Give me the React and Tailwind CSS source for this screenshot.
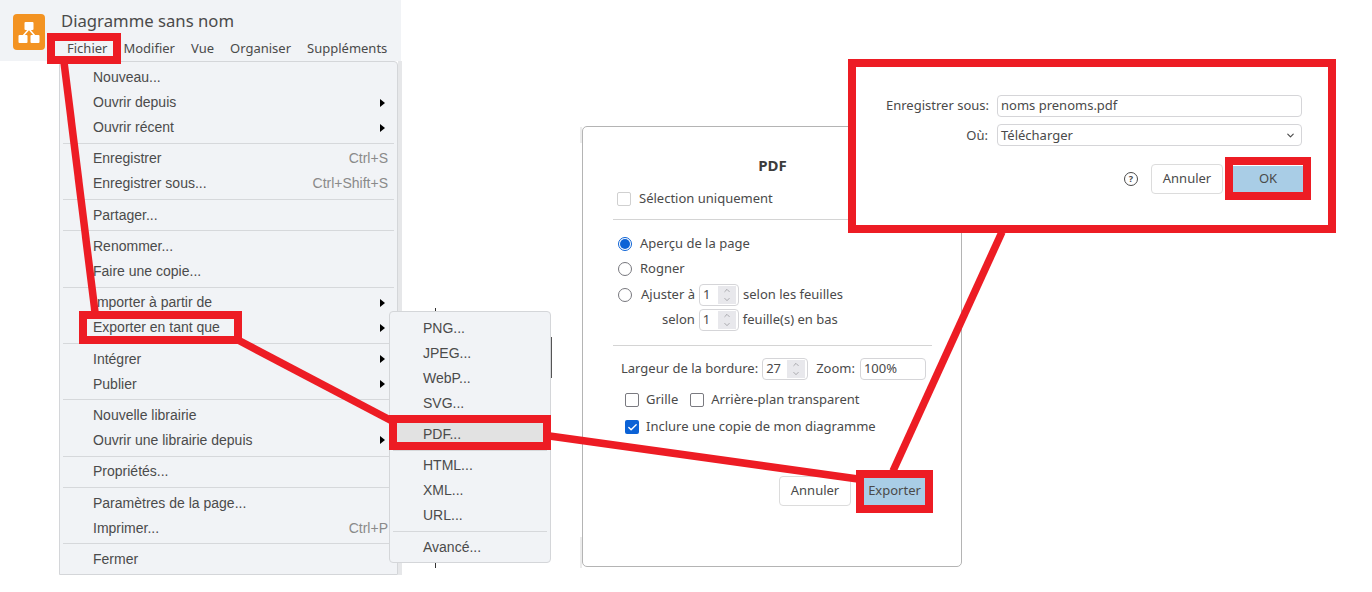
import { ChevronDown, ChevronUp, Check } from "lucide-react";

const UI_FONT = "font-['Noto_Sans',sans-serif]";

const fileMenu = [
  [{ label: "Nouveau..." }, { label: "Ouvrir depuis", sub: true }, { label: "Ouvrir récent", sub: true }],
  [{ label: "Enregistrer", key: "Ctrl+S" }, { label: "Enregistrer sous...", key: "Ctrl+Shift+S" }],
  [{ label: "Partager..." }],
  [{ label: "Renommer..." }, { label: "Faire une copie..." }],
  [{ label: "Importer à partir de", sub: true }, { label: "Exporter en tant que", sub: true }],
  [{ label: "Intégrer", sub: true }, { label: "Publier", sub: true }],
  [{ label: "Nouvelle librairie" }, { label: "Ouvrir une librairie depuis", sub: true }],
  [{ label: "Propriétés..." }],
  [{ label: "Paramètres de la page..." }, { label: "Imprimer...", key: "Ctrl+P" }],
  [{ label: "Fermer" }],
];

const exportMenu = [
  [{ label: "PNG..." }, { label: "JPEG..." }, { label: "WebP..." }, { label: "SVG..." }],
  [{ label: "PDF...", active: true }],
  [{ label: "HTML..." }, { label: "XML..." }, { label: "URL..." }],
  [{ label: "Avancé..." }],
];

function MenuRow({ item }) {
  return (
    <div className={`flex h-[25px] items-center pl-[33px] pr-[9px] ${item.active ? "bg-[#e2e2e2]" : ""}`}>
      <span className="flex-1">{item.label}</span>
      {item.key && <span className="text-[#8a8a8a]">{item.key}</span>}
      {item.sub && <span className="mr-[3px] h-0 w-0 border-y-[4px] border-l-[5px] border-y-transparent border-l-black" />}
    </div>
  );
}

function Menu({ groups, className }) {
  return (
    <div className={`absolute rounded-[4px] border border-[#d4d6d9] bg-[#f1f3f6] font-['Liberation_Sans',sans-serif] text-[14px] text-[#4b4b4b] ${className}`}>
      {groups.map((group, i) => (
        <div key={i}>
          {i > 0 && <div className="mx-[3px] my-[2.67px] h-px bg-[#d6d8db]" />}
          {group.map((item) => <MenuRow key={item.label} item={item} />)}
        </div>
      ))}
    </div>
  );
}

function Checkbox({ checked }) {
  if (checked) {
    return (
      <span className="flex h-[14px] w-[14px] shrink-0 items-center justify-center rounded-[2px] bg-[#0b62d6]">
        <Check size={11} strokeWidth={3} className="text-white" />
      </span>
    );
  }
  return <span className="block h-[14px] w-[14px] shrink-0 rounded-[2px] border border-[#7a7a80] bg-white" />;
}

function Radio({ checked }) {
  return (
    <span className={`flex h-[14px] w-[14px] items-center justify-center rounded-full border bg-white ${checked ? "border-[#0b62d6]" : "border-[#77777d]"}`}>
      {checked && <span className="h-[10px] w-[10px] rounded-full bg-[#0b62d6]" />}
    </span>
  );
}

function Spinner({ value, width }) {
  return (
    <span className={`flex h-[22px] items-center justify-between rounded-[4px] border border-[#d5d5d8] bg-white pl-[3px] pr-[2px] ${width}`}>
      <span>{value}</span>
      <span className="flex h-[18px] w-[18px] flex-col items-center justify-center bg-[#e8e8ec] text-[#77777d]">
        <ChevronUp size={10} strokeWidth={1.5} />
        <ChevronDown size={10} strokeWidth={1.5} />
      </span>
    </span>
  );
}

function RedBox({ className }) {
  return <div className={`absolute border-[8px] border-[#ed1c24] ${className}`} />;
}

function Header() {
  return (
    <div className={`absolute left-0 top-0 flex h-[61px] w-[401px] items-start bg-[#f1f3f6] pl-[13px] pt-[14px] ${UI_FONT}`}>
      <div className="flex h-[36px] w-[32px] shrink-0 items-center justify-center rounded-[4px] bg-[#f39322]">
        <svg width="26" height="24" viewBox="0 0 26 24">
          <path d="M13 9 L7 16 M13 9 L19 16" stroke="#fff" strokeWidth="1.6" fill="none" />
          <rect x="8.5" y="2" width="9" height="8" rx="1" fill="#fff" />
          <rect x="2.5" y="15" width="9" height="8" rx="1" fill="#fff" />
          <rect x="14.5" y="15" width="9" height="8" rx="1" fill="#fff" />
        </svg>
      </div>
      <div className="-mt-[5px] ml-[16px] text-[#4a4a4a]">
        <div className="text-[16.7px] leading-[24px]">Diagramme sans nom</div>
        <div className="mt-[5px] flex gap-[16px] pl-[6px] text-[13px] leading-[20px]">
          <span>Fichier</span>
          <span>Modifier</span>
          <span>Vue</span>
          <span>Organiser</span>
          <span>Suppléments</span>
        </div>
      </div>
    </div>
  );
}

function PdfDialog() {
  return (
    <div className={`absolute left-[582px] top-[126px] h-[441px] w-[380px] rounded-[5px] border border-[#b4b4b4] bg-white pl-[30px] pr-[29px] pt-[28px] text-[13px] text-[#4a4a4a] ${UI_FONT}`}>
      <div className="text-center text-[15px] font-bold leading-[20px] text-[#3c3c3c]">PDF</div>
      <div className="mt-[15px] flex h-[18px] items-center gap-[8px] pl-[4px]">
        <span className="h-[14px] w-[14px] rounded-[2px] border border-[#d0d0d0] bg-white" />
        <span>Sélection uniquement</span>
      </div>
      <div className="mt-[11px] h-px bg-[#d4d4d4]" />
      <div className="mt-[15px] flex h-[18px] items-center gap-[8px] pl-[5px]">
        <Radio checked />
        <span>Aperçu de la page</span>
      </div>
      <div className="mt-[7px] flex h-[18px] items-center gap-[8px] pl-[5px]">
        <Radio />
        <span>Rogner</span>
      </div>
      <div className="mt-[6px] flex h-[22px] items-center pl-[5px]">
        <Radio />
        <span className="ml-[9px] mr-[4px]">Ajuster à</span>
        <Spinner value="1" width="w-[40px]" />
        <span className="ml-[4px]">selon les feuilles</span>
      </div>
      <div className="mt-[3px] flex h-[22px] items-center pl-[49px]">
        <span className="mr-[4px]">selon</span>
        <Spinner value="1" width="w-[40px]" />
        <span className="ml-[4px]">feuille(s) en bas</span>
      </div>
      <div className="mt-[14px] h-px bg-[#d4d4d4]" />
      <div className="mt-[12px] flex h-[22px] items-center pl-[8px]">
        <span className="mr-[4px]">Largeur de la bordure:</span>
        <Spinner value="27" width="w-[46px]" />
        <span className="ml-[8px] mr-[5px]">Zoom:</span>
        <span className="flex h-[22px] w-[66px] items-center rounded-[4px] border border-[#d5d5d8] pl-[3px]">100%</span>
      </div>
      <div className="mt-[11px] flex h-[18px] items-center pl-[12px]">
        <Checkbox />
        <span className="ml-[7px]">Grille</span>
        <span className="ml-[12px] flex"><Checkbox /></span>
        <span className="ml-[7px]">Arrière-plan transparent</span>
      </div>
      <div className="mt-[9px] flex h-[18px] items-center gap-[7px] pl-[12px]">
        <Checkbox checked />
        <span>Inclure une copie de mon diagramme</span>
      </div>
      <div className="mt-[40px] flex h-[30px] justify-end pr-[7px]">
        <span className="flex w-[72px] items-center justify-center rounded-[4px] border border-[#dcdcdc] bg-white">Annuler</span>
        <span className="ml-[13px] flex w-[61px] items-center justify-center bg-[#a9cde6]">Exporter</span>
      </div>
    </div>
  );
}

function SaveDialog() {
  return (
    <div className={`absolute left-[848px] top-[59px] h-[174px] w-[488px] bg-white pl-[38px] pr-[34px] pt-[36px] text-[13px] text-[#4a4a4a] ${UI_FONT}`}>
      <div className="flex h-[22px] items-center">
        <span className="w-[102px] whitespace-nowrap text-right">Enregistrer sous:</span>
        <span className="ml-[9px] flex h-[22px] flex-1 items-center rounded-[4px] border border-[#d5d5d8] pl-[3px]">noms prenoms.pdf</span>
      </div>
      <div className="mt-[7px] flex h-[22px] items-center">
        <span className="w-[102px] pt-[1px] text-right">Où:</span>
        <span className="ml-[9px] flex h-[22px] flex-1 items-center justify-between rounded-[4px] border border-[#d5d5d8] px-[3px] pt-[1px]">
          Télécharger
          <ChevronDown size={11} strokeWidth={2.5} className="mr-[2px]" />
        </span>
      </div>
      <div className="-mr-[1px] mt-[18px] flex h-[30px] items-center justify-end">
        <span className="flex h-[14px] w-[14px] items-center justify-center rounded-full border-[1.5px] border-[#4a4a4a] text-[9px] font-bold">?</span>
        <span className="ml-[13px] flex h-[30px] w-[72px] items-center justify-center rounded-[4px] border border-[#dcdcdc]">Annuler</span>
        <span className="ml-[10px] flex h-[27px] w-[70px] items-center justify-center bg-[#a9cde6]">OK</span>
      </div>
    </div>
  );
}

export default function App() {
  return (
    <div className="relative h-[592px] w-[1372px] overflow-hidden bg-white">
      <Header />
      <div className="absolute left-[398px] top-[61px] h-[514px] w-[4px] bg-[#e6e7e9]" />
      <Menu groups={fileMenu} className="left-[59px] top-[61px] h-[514px] w-[339px] rounded-b-none pt-[3px]" />
      <div className="absolute left-[435px] top-[308px] h-[3px] w-px bg-[#333]" />
      <div className="absolute left-[435px] top-[563px] h-[5px] w-px bg-[#333]" />
      <div className="absolute left-[551px] top-[337px] h-[41px] w-px bg-[#555]" />
      <Menu groups={exportMenu} className="left-[389px] top-[311px] h-[252px] w-[162px] pt-[3.6px]" />
      <div className="absolute left-[580px] top-[127px] h-[16px] w-[2px] bg-[#ececec]" />
      <div className="absolute left-[580px] top-[537px] h-[31px] w-[2px] bg-[#ececec]" />
      <PdfDialog />
      <SaveDialog />
      <svg className="absolute left-0 top-0" width="1372" height="592" viewBox="0 0 1372 592">
        <g stroke="#ed1c24" strokeWidth="7.5">
          <line x1="64" y1="62" x2="95" y2="312" />
          <line x1="238" y1="340" x2="392" y2="421" />
          <line x1="546" y1="435.5" x2="858" y2="479" />
          <line x1="893" y1="471" x2="1002" y2="232" />
        </g>
      </svg>
      <RedBox className="left-[47px] top-[33px] h-[31px] w-[74px]" />
      <RedBox className="left-[79px] top-[311px] h-[33px] w-[163px]" />
      <RedBox className="left-[389px] top-[415px] h-[35px] w-[162px]" />
      <RedBox className="left-[856px] top-[470px] h-[43px] w-[77px]" />
      <RedBox className="left-[848px] top-[59px] h-[174px] w-[488px]" />
      <RedBox className="left-[1225px] top-[157px] h-[43px] w-[86px]" />
    </div>
  );
}
